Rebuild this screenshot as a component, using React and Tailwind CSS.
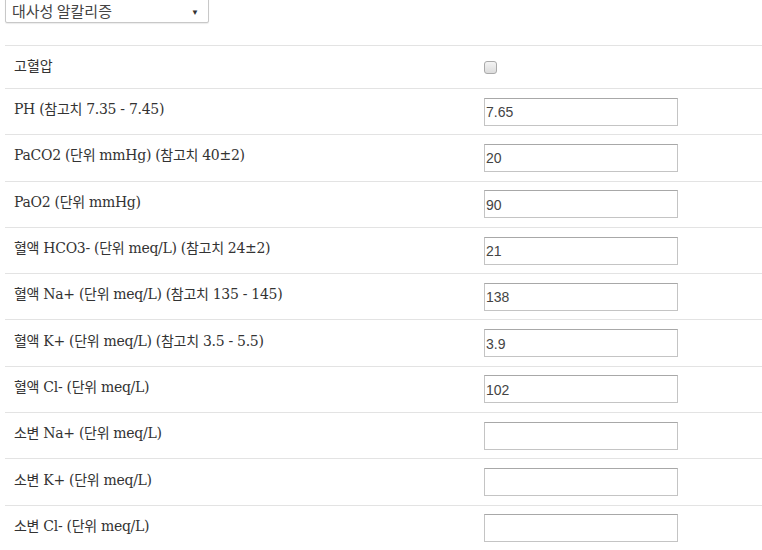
const rows = [
  { label: "PH (참고치 7.35 - 7.45)", value: "7.65" },
  { label: "PaCO2 (단위 mmHg) (참고치 40±2)", value: "20" },
  { label: "PaO2 (단위 mmHg)", value: "90" },
  { label: "혈액 HCO3- (단위 meq/L) (참고치 24±2)", value: "21" },
  { label: "혈액 Na+ (단위 meq/L) (참고치 135 - 145)", value: "138" },
  { label: "혈액 K+ (단위 meq/L) (참고치 3.5 - 5.5)", value: "3.9" },
  { label: "혈액 Cl- (단위 meq/L)", value: "102" },
  { label: "소변 Na+ (단위 meq/L)", value: "" },
  { label: "소변 K+ (단위 meq/L)", value: "" },
  { label: "소변 Cl- (단위 meq/L)", value: "" },
];

const labelFont = "[font-family:'DejaVu_Serif','Noto_Sans_CJK_KR',serif]";

export default function App() {
  return (
    <div className="w-[762px] h-[550px] overflow-hidden bg-white text-[#333]">
      <div className="pl-[5px] -mt-[7px]">
        <div className="w-[204px] h-[30px] border border-[#c8c8c8] rounded-[2px] bg-white flex items-center justify-between pl-[6px] pr-[9px] shadow-[0_1px_1px_rgba(0,0,0,0.08)]">
          <span className="text-[15px] pt-[7px] text-[#444] font-['Noto_Sans_CJK_KR',sans-serif]">대사성 알칼리증</span>
          <span className="text-[8px] pt-[7px] text-[#333]">▼</span>
        </div>
      </div>

      <div className="ml-[5px] mt-[22px] text-[14px]">
        <div className="h-[43px] border-t border-[#e3e3e3] flex items-center">
          <div className={`w-[471px] pl-[9px] ${labelFont} pb-[1px]`}>고혈압</div>
          <div className="w-[13px] h-[13px] ml-[8px] rounded-[3px] border border-[#aaa] bg-gradient-to-b from-[#f4f4f4] to-[#dcdcdc]"></div>
        </div>
        {rows.map((r) => (
          <div key={r.label} className="h-[46.3px] border-t border-[#e3e3e3] flex items-center">
            <div className={`w-[471px] pl-[9px] pb-[4px] ${labelFont} tracking-[-0.3px]`}>{r.label}</div>
            <div className="ml-[8px] w-[194px] h-[28px] border border-[#c4c4c4] border-t-[#a8a8a8] flex items-center pl-[1px] pt-[2px] text-[14px] text-[#444] font-['Liberation_Sans',Arial,sans-serif]">
              {r.value}
            </div>
          </div>
        ))}
      </div>
    </div>
  );
}
